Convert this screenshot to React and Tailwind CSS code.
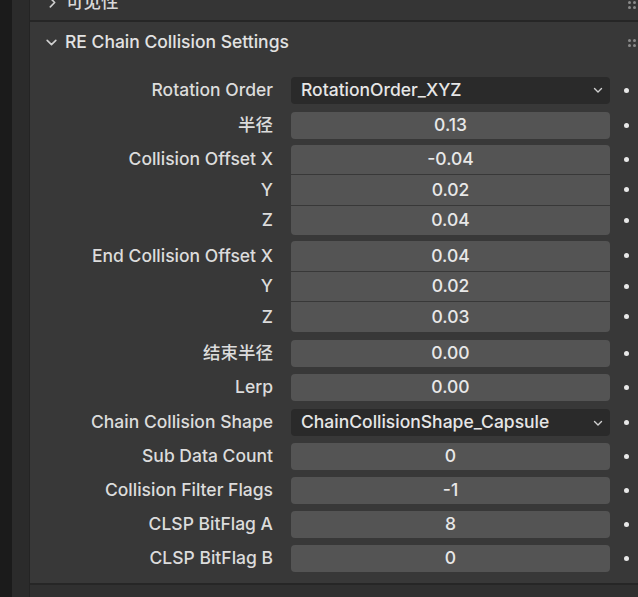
import React from 'react';

const font = { fontFamily: 'Inter, "Noto Sans CJK SC", sans-serif' };

const Dot = () => (
  <div className="w-[27px] pl-[14px] flex items-center">
    <div className="w-[5px] h-[5px] rounded-full bg-[#e8e8e8]" />
  </div>
);

const Grip = () => (
  <div className="grid grid-cols-2 gap-[2px]">
    <span className="w-[3px] h-[3px] rounded-full bg-[#8a8a8a]" />
    <span className="w-[3px] h-[3px] rounded-full bg-[#8a8a8a]" />
    <span className="w-[3px] h-[3px] rounded-full bg-[#8a8a8a]" />
    <span className="w-[3px] h-[3px] rounded-full bg-[#8a8a8a]" />
  </div>
);

const Chevron = ({ down }) => (
  <svg width="13" height="13" viewBox="0 0 12 12" className="shrink-0">
    {down ? (
      <path d="M2 4 L6 8 L10 4" stroke="#d0d0d0" strokeWidth="1.5" fill="none" strokeLinecap="round" strokeLinejoin="round" />
    ) : (
      <path d="M4 2 L8 6 L4 10" stroke="#d0d0d0" strokeWidth="1.5" fill="none" strokeLinecap="round" strokeLinejoin="round" />
    )}
  </svg>
);

const Label = ({ children }) => (
  <div className="w-[261px] pr-[18px] text-right text-[17.5px] font-medium text-[#dcdcdc] truncate">{children}</div>
);

const Dropdown = ({ label, value, mt }) => (
  <div className={`flex items-center h-[27px] ${mt}`}>
    <Label>{label}</Label>
    <div className="w-[319px] h-full rounded-[4px] bg-[#2a2a2a] flex items-center pl-[10px] pr-[6px] text-[17.5px] font-medium text-[#e6e6e6]">
      <span className="flex-1">{value}</span>
      <svg width="12" height="12" viewBox="0 0 12 12" className="shrink-0">
        <path d="M2.5 4.5 L6 8 L9.5 4.5" stroke="#d0d0d0" strokeWidth="1.4" fill="none" strokeLinecap="round" strokeLinejoin="round" />
      </svg>
    </div>
    <Dot />
  </div>
);

const Field = ({ label, value, mt }) => (
  <div className={`flex items-center h-[27px] ${mt}`}>
    <Label>{label}</Label>
    <div className="w-[319px] h-full rounded-[4px] bg-[#545454] flex items-center justify-center text-[17.5px] font-medium text-[#e8e8e8]">
      {value}
    </div>
    <Dot />
  </div>
);

const Group = ({ rows, mt }) => (
  <div className={`flex flex-col gap-[1px] ${mt}`}>
    {rows.map(([label, value], i) => (
      <div key={i} className="flex items-center h-[29.5px]">
        <Label>{label}</Label>
        <div
          className={`w-[319px] h-full bg-[#545454] flex items-center justify-center text-[17.5px] font-medium text-[#e8e8e8] ${
            i === 0 ? 'rounded-t-[4px]' : i === rows.length - 1 ? 'rounded-b-[4px]' : ''
          }`}
        >
          {value}
        </div>
        <Dot />
      </div>
    ))}
  </div>
);

export default function App() {
  return (
    <div className="w-[638px] h-[597px] flex bg-[#1d1d1d] overflow-hidden" style={font}>
      <div className="w-[12px] shrink-0 bg-[#1b1b1b]" />
      <div className="w-[18px] shrink-0 bg-[#2b2b2b] border-r border-[#242424]" />
      <div className="flex-1 flex flex-col bg-[#353535]">
        {/* collapsed subpanel */}
        <div className="h-[22px] shrink-0 flex items-start pl-[16px] pr-[4px] border-b-2 border-[#262626] relative">
          <div className="flex items-center gap-[7px] -mt-[9px] h-[22px]">
            <Chevron />
            <span className="text-[17.5px] font-medium text-[#d8d8d8]">可见性</span>
          </div>
          <div className="absolute right-[2px] top-[1px]">
            <Grip />
          </div>
        </div>
        {/* main subpanel */}
        <div className="flex-1 flex flex-col bg-[#383838] border-b-2 border-[#262626]">
          <div className="h-[40px] shrink-0 flex items-center pl-[15px] pr-[4px] relative">
            <div className="flex items-center gap-[7px]">
              <Chevron down />
              <span className="text-[17.5px] font-medium text-[#e2e2e2]">RE Chain Collision Settings</span>
            </div>
            <div className="absolute right-[2px] top-[17px]">
              <Grip />
            </div>
          </div>
          <div className="flex flex-col pt-[14.5px]">
            <Dropdown label="Rotation Order" value="RotationOrder_XYZ" mt="" />
            <Field label="半径" value="0.13" mt="mt-[8px]" />
            <Group
              mt="mt-[6px]"
              rows={[
                ['Collision Offset X', '-0.04'],
                ['Y', '0.02'],
                ['Z', '0.04'],
              ]}
            />
            <Group
              mt="mt-[6px]"
              rows={[
                ['End Collision Offset X', '0.04'],
                ['Y', '0.02'],
                ['Z', '0.03'],
              ]}
            />
            <Field label="结束半径" value="0.00" mt="mt-[8.5px]" />
            <Field label="Lerp" value="0.00" mt="mt-[7px]" />
            <Dropdown label="Chain Collision Shape" value="ChainCollisionShape_Capsule" mt="mt-[8px]" />
            <Field label="Sub Data Count" value="0" mt="mt-[7px]" />
            <Field label="Collision Filter Flags" value="-1" mt="mt-[7px]" />
            <Field label="CLSP BitFlag A" value="8" mt="mt-[7px]" />
            <Field label="CLSP BitFlag B" value="0" mt="mt-[7px]" />
          </div>
        </div>
        <div className="h-[12px] shrink-0 bg-[#303030]" />
      </div>
    </div>
  );
}
